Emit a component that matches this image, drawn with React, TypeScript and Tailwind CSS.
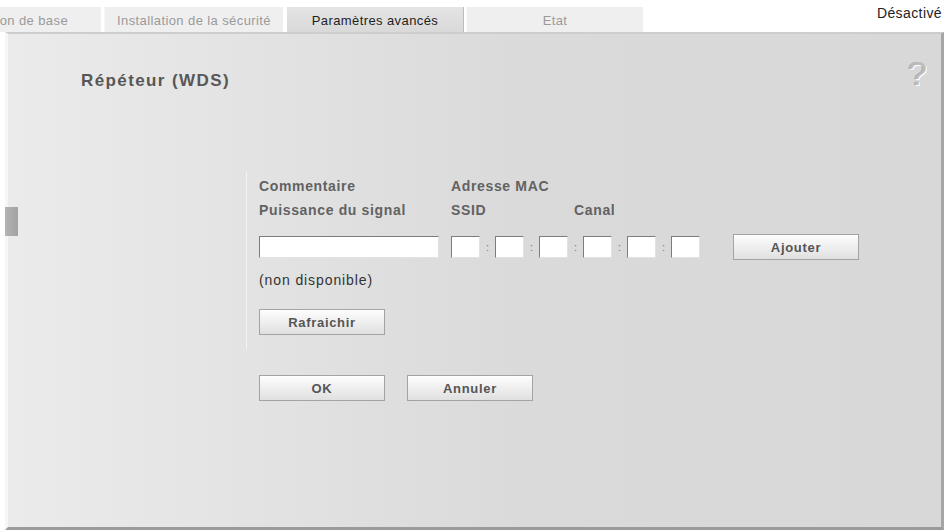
import React from "react";

function Tab({ label, active, width }: { label: string; active?: boolean; width: string }) {
  return (
    <div
      className={
        "h-[25px] flex items-center justify-center shrink-0 text-[13px] tracking-[0.4px] pt-px " +
        width +
        (active
          ? " bg-[linear-gradient(to_bottom,#e4e4e4,#d9d9d9)] text-[#1e1e1e] border-l border-l-white shadow-[1px_0_0_#bdbdbd]"
          : " bg-[#efefef] text-[#9a9a9a] border-l border-l-[#f8f8f8]")
      }
    >
      <span className="whitespace-nowrap">{label}</span>
    </div>
  );
}

function Btn({ label }: { label: string }) {
  return (
    <button
      type="button"
      className="w-[126px] h-[26px] border border-[#a3a3a3] bg-[linear-gradient(to_bottom,#fdfdfd,#ececec_60%,#e0e0e0)] shadow-[inset_0_1px_0_#ffffff] text-[13px] tracking-[0.7px] font-bold text-[#555] flex items-center justify-center"
    >
      {label}
    </button>
  );
}

function Field({ width }: { width: string }) {
  return (
    <div
      className={
        "h-[22px] bg-white border border-t-[#7c7c7c] border-l-[#7c7c7c] border-r-[#e2e2e2] border-b-[#e2e2e2] shrink-0 " +
        width
      }
    />
  );
}

export default function App() {
  const octets = [0, 1, 2, 3, 4, 5];
  return (
    <div className="w-[948px] h-[532px] bg-white overflow-hidden font-['Liberation_Sans',Arial,sans-serif] text-[12px] leading-none">
      {/* tab strip */}
      <div className="flex h-[32px]">
        <div className="flex items-end gap-[3px] ml-[-86px]">
          <Tab label="Installation de base" width="w-[187px]" />
          <Tab label="Installation de la sécurité" width="w-[179px]" />
          <Tab label="Paramètres avancés" width="w-[177px]" active />
          <Tab label="Etat" width="w-[177px]" />
        </div>
        <div className="ml-auto pr-[6px] pt-[6px] text-[14px] tracking-[0.4px] text-[#222]">Désactivé</div>
      </div>

      {/* settings panel */}
      <div className="relative ml-[5px] w-[939px] h-[498px] border-t-2 border-t-[#cdcdcd] border-l-[3px] border-l-[#f6f6f6] border-r-[3px] border-r-[#a6a6a6] border-b-[3px] border-b-[#9b9b9b] bg-[linear-gradient(to_right,#ebebeb,#dadada_55%,#d8d8d8)]">
        {/* side marker */}
        <div className="absolute left-[-3px] top-[173px] w-[13px] h-[29px] bg-[linear-gradient(to_right,#b4b4b4,#a2a2a2)]" />

        <div className="flex flex-col pt-[38px]">
          <div className="flex items-start justify-between h-[18px]">
            <h1 className="ml-[73px] text-[17px] leading-[18px] tracking-[1.4px] font-bold text-[#575757]">
              Répéteur (WDS)
            </h1>
            <span className="mr-[14px] mt-[-16px] text-[34px] leading-[34px] text-[#bcbcbc] [text-shadow:1px_1px_0_#ffffff,-1px_0_0_#a8a8a8]">
              ?
            </span>
          </div>

          <div className="ml-[238px] mt-[82px] w-[640px] border-l border-l-[#f4f4f4] pl-[12px] pt-[2px] pb-[14px] flex flex-col">
            <div className="h-[24px] flex items-center font-bold text-[#626262] text-[14px] tracking-[0.65px]">
              <div className="w-[192px]">Commentaire</div>
              <div className="w-[123px]">Adresse MAC</div>
            </div>
            <div className="h-[24px] flex items-center font-bold text-[#626262] text-[14px] tracking-[0.65px]">
              <div className="w-[192px]">Puissance du signal</div>
              <div className="w-[123px]">SSID</div>
              <div>Canal</div>
            </div>

            <div className="mt-[12px] flex items-center">
              <Field width="w-[180px]" />
              <div className="ml-[12px] flex items-center">
                {octets.map((i) => (
                  <React.Fragment key={i}>
                    {i > 0 && (
                      <span className="w-[15px] text-center text-[11px] text-[#777]">:</span>
                    )}
                    <Field width="w-[29px]" />
                  </React.Fragment>
                ))}
              </div>
              <div className="ml-[33px]">
                <Btn label="Ajouter" />
              </div>
            </div>

            <div className="mt-[12px] h-[16px] flex items-center text-[14px] tracking-[0.9px] text-[#333]">
              (non disponible)
            </div>

            <div className="mt-[21px]">
              <Btn label="Rafraichir" />
            </div>
          </div>

          <div className="ml-[251px] mt-[26px] flex gap-[22px]">
            <Btn label="OK" />
            <Btn label="Annuler" />
          </div>
        </div>
      </div>
    </div>
  );
}
